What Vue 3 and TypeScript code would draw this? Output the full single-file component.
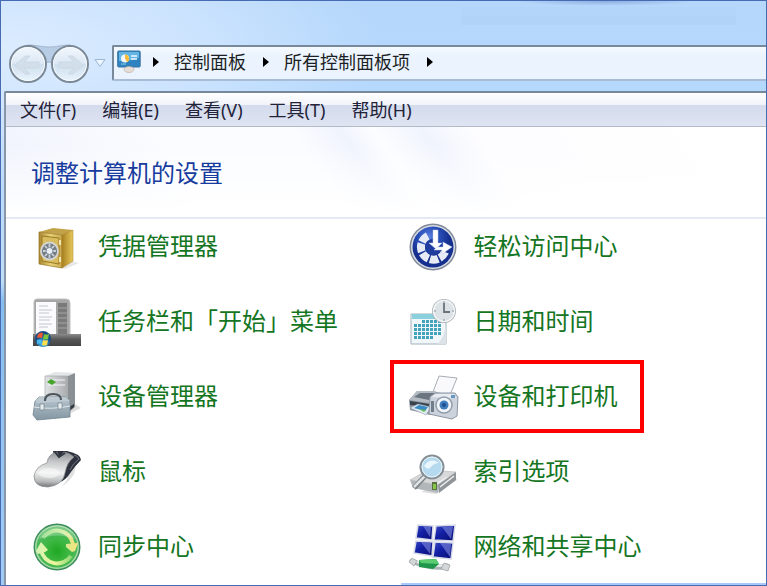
<script setup lang="ts">
interface PanelItem {
  id: string
  label: string
  highlighted?: boolean
}

const crumbs: string[] = ['控制面板', '所有控制面板项']
const menus: string[] = ['文件(F)', '编辑(E)', '查看(V)', '工具(T)', '帮助(H)']
const items: PanelItem[] = [
  { id: 'credentials', label: '凭据管理器' },
  { id: 'access', label: '轻松访问中心' },
  { id: 'taskbar', label: '任务栏和「开始」菜单' },
  { id: 'date', label: '日期和时间' },
  { id: 'devices', label: '设备管理器' },
  { id: 'printers', label: '设备和打印机', highlighted: true },
  { id: 'mouse', label: '鼠标' },
  { id: 'index', label: '索引选项' },
  { id: 'sync', label: '同步中心' },
  { id: 'network', label: '网络和共享中心' },
]

const dateDots: { x: number; y: number }[] = []
for (let row = 0; row < 5; row++) {
  for (let col = 0; col < 7; col++) {
    if ((row === 0 && col < 2) || (row === 4 && col > 4)) continue
    dateDots.push({ x: 5 + col * 4, y: 22 + row * 4 })
  }
}
</script>

<template>
  <div class="window">
    <header class="chrome">
      <div class="history">
        <svg class="history-plate" viewBox="0 0 84 42" aria-hidden="true">
          <defs>
            <linearGradient id="glass" x1="0" y1="0" x2="0" y2="1">
              <stop offset="0" stop-color="#f3f8fd" />
              <stop offset=".48" stop-color="#dce8f4" />
              <stop offset=".52" stop-color="#cfdfee" />
              <stop offset="1" stop-color="#eaf5fe" />
            </linearGradient>
          </defs>
          <path d="M21 2C30 2 34 4 42 4S54 2 63 2a19 19 0 0 1 0 37C54 39 51 19 42 19S30 39 21 39A19 19 0 0 1 21 2Z" fill="#b7cde6" stroke="#a3b7cd" />
          <g fill="url(#glass)" stroke="#7b8997" stroke-width="2">
            <circle cx="21" cy="21" r="18" />
            <circle cx="63" cy="21" r="18" />
          </g>
          <g fill="none" stroke="#f8fcff" stroke-width="1" opacity=".9">
            <circle cx="21" cy="21" r="16.500" />
            <circle cx="63" cy="21" r="16.500" />
          </g>
          <g fill="#d2dfea" stroke="#c8d6e3" stroke-width=".7">
            <path d="m8 22 10-9h5l-6 6h15v6H17l6 6h-5Z" />
            <path d="m76 22-10-9h-5l6 6H52v6h15l-6 6h5Z" />
          </g>
        </svg>
        <button class="round" type="button" aria-label="后退"></button>
        <button class="round" type="button" aria-label="前进"></button>
      </div>
      <button class="recent" type="button" aria-label="最近的页面">
        <svg viewBox="0 0 12 10"><path d="M1 1.500h10L6 8.500Z" fill="#edf6ff" stroke="#9bb5d2" /></svg>
      </button>
      <nav class="address">
        <svg class="panel-icon" viewBox="0 0 24 24" aria-hidden="true">
          <rect x=".7" y="1" width="22.500" height="16" rx="1" fill="#2f82c0" stroke="#3974a1" />
          <path d="M2 2h20v6Q12 12 2 11Z" fill="#63b5e4" />
          <circle cx="8" cy="8.500" r="4" fill="#f2f7fa" />
          <path d="M8 8.500v-4a4 4 0 0 1 2 7.500Z" fill="#f6bc38" />
          <path d="M14 6h6M14 9h6" stroke="#eef8ff" stroke-width="1.500" />
          <path d="M4 14h5" stroke="#8bd0ef" />
          <path d="M9 17h6l1 3H8Z" fill="#c1cbd2" />
          <ellipse cx="12" cy="19.500" rx="5" ry="3" fill="#e6ddd6" stroke="#b5a99d" stroke-width=".6" />
        </svg>
        <template v-for="crumb in crumbs" :key="crumb">
          <svg class="chevron" viewBox="0 0 6 10" aria-hidden="true"><path d="M0 0 6 5 0 10Z" /></svg>
          <a href="#">{{ crumb }}</a>
        </template>
        <svg class="chevron" viewBox="0 0 6 10" aria-hidden="true"><path d="M0 0 6 5 0 10Z" /></svg>
      </nav>
    </header>

    <div class="body">
      <div class="menubar">
        <button v-for="menu in menus" :key="menu" type="button">{{ menu }}</button>
      </div>
      <div class="banner"><h1>调整计算机的设置</h1></div>
      <main class="grid">
        <a v-for="item in items" :key="item.id" href="#" class="item" :class="{ highlighted: item.highlighted }">
          <svg v-if="item.id === 'credentials'" class="icon" viewBox="0 0 48 48" aria-hidden="true">
            <defs>
              <linearGradient id="gold"><stop stop-color="#a9852f" /><stop offset=".5" stop-color="#ead376" /><stop offset="1" stop-color="#c9a94e" /></linearGradient>
              <linearGradient id="goldSide"><stop stop-color="#a8801f" /><stop offset="1" stop-color="#e7c85e" /></linearGradient>
            </defs>
            <path d="M27 45 39 38l7 2-14 6Z" fill="#ddd" opacity=".7" />
            <path d="m6 9 14-4 20 2-10 5Z" fill="#c3a34a" />
            <path d="m6 9 23 3v33L6 41Z" fill="url(#gold)" stroke="#967426" stroke-width=".7" />
            <path d="m29 12 11-5v31l-11 7Z" fill="url(#goldSide)" stroke="#a98324" stroke-width=".5" />
            <path d="m9 13 17 2v26L9 38Z" fill="#d9bc5d" stroke="#9a7826" />
            <path d="M26 17h2v5h-2zM26 34h2v5h-2z" fill="#f2e6b0" />
            <circle cx="16.500" cy="28" r="8.500" fill="#777c80" stroke="#d4d6d6" stroke-width="1.800" />
            <path d="M16.500 21v14M10 28h13M12 23l9 10M21 23l-9 10" stroke="#c8d3dd" stroke-width="1.800" />
            <circle cx="16.500" cy="28" r="3.500" fill="#e8eef2" stroke="#788999" />
          </svg>

          <svg v-else-if="item.id === 'access'" class="icon" viewBox="0 0 48 48" aria-hidden="true">
            <defs>
              <radialGradient id="navy" cx=".4" cy=".25"><stop stop-color="#5c80df" /><stop offset=".5" stop-color="#2a50ba" /><stop offset="1" stop-color="#15308e" /></radialGradient>
            </defs>
            <circle cx="24" cy="24" r="23.500" fill="#818a99" />
            <circle cx="24" cy="24" r="22" fill="#d9dde3" />
            <circle cx="24" cy="24" r="20.500" fill="url(#navy)" />
            <path d="M36 29A12.500 12.500 0 1 1 20 12.500" fill="none" stroke="#e6ebf6" stroke-width="8" stroke-dasharray="8.200 1.600" />
            <circle cx="24" cy="24" r="8" fill="#1f3d9e" />
            <path d="M24 7h5v13h4l-6 6-7-6h4Z" fill="#fff" stroke="#b6c8ea" stroke-width=".5" />
            <path d="M28 24h6v-5l9 5-10 7v-4h-8Z" fill="#fff" stroke="#b6c8ea" stroke-width=".5" />
          </svg>

          <svg v-else-if="item.id === 'taskbar'" class="icon" viewBox="0 0 48 48" aria-hidden="true">
            <defs>
              <linearGradient id="bar" x1="0" y1="0" x2="0" y2="1"><stop stop-color="#8b8b8b" /><stop offset=".45" stop-color="#565656" /><stop offset="1" stop-color="#444" /></linearGradient>
              <radialGradient id="orb" cy=".8"><stop stop-color="#51c9ef" /><stop offset="1" stop-color="#174b85" /></radialGradient>
            </defs>
            <path d="M1 38V4q0-3 3-3h29q4 0 4 4v33Z" fill="#a6a6a6" stroke="#c0c0c0" />
            <path d="M25 5h9v31h-9Z" fill="#7a7a7a" />
            <path d="M25 10h9M25 15h9M25 20h9M25 25h9M25 30h9" stroke="#a5a5a5" />
            <path d="M3 4h20v33H3Z" fill="#fbfbff" />
            <path d="M6 8h9M6 12h13M6 15h10M6 19h13M6 22h11M6 26h13M6 29h9" stroke="#c3c6ce" />
            <path d="M0 36h48v12H0Z" fill="url(#bar)" />
            <circle cx="10" cy="41" r="8" fill="url(#orb)" />
            <path d="m5 36q3-2 5-1l-1 5q-3-1-5 0Z" fill="#ef5934" />
            <path d="m11 36q2 1 5 0l-1 5q-3 1-5 0Z" fill="#7bc63c" />
            <path d="m4 42q3-1 5 0l-1 4q-3-1-4 0Z" fill="#47b8ef" />
            <path d="m10 42q2 1 5 0l-1 5q-3 1-5 0Z" fill="#ffe04c" />
          </svg>

          <svg v-else-if="item.id === 'date'" class="icon" viewBox="0 0 48 48" aria-hidden="true">
            <path d="M2 16h35v30H2Z" fill="#f0f6fa" stroke="#a3b2ba" />
            <path d="M3 16h33v5H3Z" fill="#8bd0dd" />
            <rect v-for="(dot, index) in dateDots" :key="index" :x="dot.x" :y="dot.y" width="3" height="3" fill="#42a3ba" />
            <path d="M37 26v20H28q7-5 9-20" fill="#dce3e8" />
            <circle cx="35" cy="13" r="12" fill="#a7afb5" />
            <circle cx="35" cy="13" r="10.500" fill="#dce2e5" stroke="#f3f5f6" stroke-width="1.500" />
            <path d="M35 5v9h6" fill="none" stroke="#68737a" stroke-width="1.800" />
            <path d="M35 3v2M35 21v2M25 13h2M43 13h2" stroke="#8b969e" />
          </svg>

          <svg v-else-if="item.id === 'devices'" class="icon" viewBox="0 0 48 48" aria-hidden="true">
            <defs>
              <linearGradient id="tower"><stop stop-color="#e0e2e3" /><stop offset="1" stop-color="#a8acae" /></linearGradient>
              <linearGradient id="tool" x1="0" y1="0" x2="0" y2="1"><stop stop-color="#b8c6cf" /><stop offset="1" stop-color="#8396a2" /></linearGradient>
            </defs>
            <path d="m36 41 12-6-6-4Z" fill="#ddd" />
            <path d="m12 3 10-4 20 1-7 3Z" fill="#e3e5e6" />
            <path d="M12 3h23v36H12Z" fill="url(#tower)" stroke="#a8aaab" stroke-width=".7" />
            <path d="M35 3 42 0v34l-7 6Z" fill="#8b9094" />
            <path d="M15 7h17M15 12h17" stroke="#f4f5f5" />
            <path d="m14 9 4-3 5 3-4 3Z" fill="#45a52c" />
            <path d="m36 34 5-3v3l-5 4Z" fill="#343b42" />
            <path d="m2 28 4-4h27l4 4v16L4 47 0 42Z" fill="url(#tool)" stroke="#718491" stroke-width=".8" />
            <path d="m2 28 4-4h27l4 4-32 2Z" fill="#bcc9d0" />
            <path d="M1 34q17 3 36-1" fill="none" stroke="#e0e8eb" />
            <path d="M12 28q0-7 8-7t8 6" fill="none" stroke="#4b545c" stroke-width="2" />
            <path d="M7 31h4v6H7zM25 30h4v6h-4z" fill="#e6edef" stroke="#73818b" stroke-width=".7" />
          </svg>

          <svg v-else-if="item.id === 'printers'" class="icon" viewBox="0 0 48 48" aria-hidden="true">
            <path d="m24 19 6-16 18 2-7 17Z" fill="#f9f9fb" stroke="#a8adb5" />
            <path d="m0 27 8-9h18l4 5v12l-9 7L1 37Z" fill="#8c949d" />
            <path d="m0 27 8-9h18l4 5-10 7Z" fill="#b5bbc2" />
            <path d="m5 24 6-4h15l2 2-8 5Z" fill="#6c7680" />
            <path d="m1 28 19 3v3L1 32Z" fill="#39434d" />
            <path d="m1 35 8-4 13 3-5 8Z" fill="#dfeaf3" stroke="#8e9ba8" stroke-width=".5" />
            <path d="m5 35 5-3 9 2-3 4Z" fill="#3a8bc5" />
            <path d="m10 36 7 1-2 2Z" fill="#68b84d" />
            <path d="m21 24 5-4h20l3 4-1 19-5 3-23-5Z" fill="#cdd3dd" stroke="#8c96a4" />
            <path d="m22 24 5-3h18l2 4Z" fill="#e8ecf1" />
            <path d="M22 28h3v11h-3z" fill="#727d8b" />
            <path d="M42 22h4v3h-4z" fill="#6696c4" />
            <circle cx="35" cy="32" r="8" fill="#f2f5f9" stroke="#929dac" stroke-width="1.500" />
            <circle cx="35" cy="32" r="4.500" fill="#3f7dbd" />
            <circle cx="35" cy="32" r="2" fill="#1e4f92" />
          </svg>

          <svg v-else-if="item.id === 'mouse'" class="icon" viewBox="0 0 48 48" aria-hidden="true">
            <defs>
              <linearGradient id="shell" x1=".55" y1="0" x2=".5" y2="1"><stop stop-color="#8f9295" /><stop offset=".3" stop-color="#c9cbcc" /><stop offset=".6" stop-color="#f0f0f0" /><stop offset=".85" stop-color="#b9bbbc" /><stop offset="1" stop-color="#77797b" /></linearGradient>
            </defs>
            <path d="M14 40q18 2 21-12l8-10-2 8q-7 12-18 14Z" fill="#ccc" opacity=".6" />
            <path d="M20 3h14q14 3 14 9-5 5-10 12-5 8-11 10Z" fill="#2e323e" />
            <path d="M24 4q-9 2-10 11Q3 18 1 28q0 11 14 11 15-2 17-14 2-11 9-16-4-4-10-5l-5 5Z" fill="url(#shell)" stroke="#85888b" stroke-width=".7" />
            <path d="m22 4 4 5 6-4" fill="none" stroke="#31363f" stroke-width="2" />
            <path d="M41 7q4 1 5 4-6 4-9 11" fill="none" stroke="#70757f" />
            <path d="M5 26q3-6 11-6 8 0 11 4-3 7-12 6-6 0-10-4Z" fill="#fff" opacity=".45" />
          </svg>

          <svg v-else-if="item.id === 'index'" class="icon" viewBox="0 0 48 48" aria-hidden="true">
            <path d="m12 44 15 2 21-14-2-3Z" fill="#ddd" />
            <path d="m1 32 18-10 28 2-18 13Z" fill="#d6d8da" stroke="#aaa" stroke-width=".5" />
            <path d="m1 32 28 5v8L4 40Z" fill="#b1b6b9" />
            <path d="m29 37 18-13v8L30 45Z" fill="#8f9498" />
            <path d="m29 35 9-6M31 39l14-11" stroke="#efefef" stroke-width="1.500" />
            <path d="M23 34h5v8h-5z" fill="#5b7040" />
            <path d="M24 36h3v5h-3z" fill="#86c94a" />
            <path d="M16 28 5 40" stroke="#7c8287" stroke-width="5" />
            <path d="M16 28 5 39" stroke="#dfe2e4" stroke-width="2.500" />
            <circle cx="23" cy="19" r="11.500" fill="#b5d9ef" stroke="#858e94" stroke-width="2" />
            <circle cx="23" cy="19" r="10" fill="none" stroke="#edf5f9" />
            <path d="M15 18q6-9 15-3-5 0-8 4t-7-1Z" fill="#f2faff" opacity=".85" />
          </svg>

          <svg v-else-if="item.id === 'sync'" class="icon" viewBox="0 0 48 48" aria-hidden="true">
            <defs>
              <radialGradient id="emerald" cy=".6"><stop stop-color="#1fa822" /><stop offset=".6" stop-color="#3fb845" /><stop offset="1" stop-color="#4cb75d" /></radialGradient>
              <linearGradient id="arrowRight" gradientUnits="userSpaceOnUse" x1="7" y1="0" x2="46" y2="0"><stop stop-color="#7fd47a" /><stop offset=".6" stop-color="#cdec94" /><stop offset="1" stop-color="#ffe07a" /></linearGradient>
              <linearGradient id="arrowLeft" gradientUnits="userSpaceOnUse" x1="3" y1="0" x2="41" y2="0"><stop stop-color="#d5f3b6" /><stop offset=".5" stop-color="#ecf49a" /><stop offset="1" stop-color="#7fd370" /></linearGradient>
            </defs>
            <circle cx="24" cy="24" r="23.500" fill="#3d8c5c" />
            <circle cx="24" cy="24" r="22" fill="#a5dca6" />
            <circle cx="24" cy="24" r="20.500" fill="url(#emerald)" />
            <path d="M10 15A16.500 16.500 0 0 1 40 21" fill="none" stroke="url(#arrowRight)" stroke-width="4" />
            <path d="m33 21 12-1-3 8-3 1-6-5Z" fill="url(#arrowRight)" />
            <path d="M38 33A16.500 16.500 0 0 1 8 27" fill="none" stroke="url(#arrowLeft)" stroke-width="4" />
            <path d="m3 28 5-9 7 8-3 2-7 2Z" fill="url(#arrowLeft)" />
            <path d="M6 16Q11 3 24 3t18 13Q25 9 6 16Z" fill="#fff" opacity=".25" />
          </svg>

          <svg v-else class="icon" viewBox="0 0 48 48" aria-hidden="true">
            <defs>
              <linearGradient id="screen" x1="0" y1="0" x2="1" y2="1"><stop stop-color="#3c4dc8" /><stop offset=".4" stop-color="#1421a6" /><stop offset="1" stop-color="#070c72" /></linearGradient>
            </defs>
            <g fill="url(#screen)" stroke="#d6d9e7" stroke-width="1.500">
              <path d="m9 2 15 1-1 14-16-2Z" />
              <path d="m27 3 19-1-2 16-19-1Z" />
              <path d="m7 18 17 1-1 14-18-3Z" />
              <path d="m26 19 18 1-2 16-18-2Z" />
            </g>
            <path d="m14 3 8 1-1 10ZM33 4l11-1-2 13ZM12 19l10 1-1 11ZM31 20l11 1-1 13Z" fill="#8c98e6" opacity=".55" />
            <path d="M3 38q20 9 35 5" fill="none" stroke="#acb3b5" stroke-width="5" stroke-linecap="round" />
            <path d="M3 37q20 8 35 5" fill="none" stroke="#eef1ef" stroke-width="2" />
            <path d="m10 37 17-1 3 5-6 5-14-2Z" fill="#20964b" />
            <path d="m10 37 17-1 3 5-18-1Z" fill="#5bcc71" />
            <path d="m3 35-3 4 5 4 3-5ZM35 40l-3 6 7 2 2-6Z" fill="#d3d7d7" stroke="#8b9294" stroke-width=".6" />
          </svg>
          <span>{{ item.label }}</span>
        </a>
      </main>
      <div class="bottom-edge"></div>
    </div>
  </div>
</template>

<style>
body {
  margin: 0;
}
</style>

<style scoped>
.window {
  box-sizing: border-box;
  min-height: 100vh;
  display: flex;
  flex-direction: column;
  border: 1px solid #466bb3;
  padding-left: 3px;
  background:
    radial-gradient(ellipse 90px 5px at 79% 0, #8eabe0 0, transparent 100%),
    linear-gradient(#b3d5f9, #b2d3f8) 94% 6px / 36% 18px no-repeat,
    radial-gradient(ellipse 380px 140px at 0 50px, #dcecff 0%, #cde4fe 50%, transparent 100%),
    linear-gradient(180deg, #b5d7fb 0, #b5d8fd 90px, #c0ddf8 280px, #86bdf0 300px, #a1cbf5 100%);
  font-family: "Noto Sans", "Noto Sans CJK SC", sans-serif;
}
button {
  padding: 0;
  border: 0;
  background: none;
  font: inherit;
  color: inherit;
}
a {
  color: inherit;
  text-decoration: none;
}
.chrome {
  display: flex;
  align-items: center;
  padding: 44px 0 10px 3px;
}
.history {
  position: relative;
  display: flex;
  width: 84px;
  height: 36px;
}
.history-plate {
  position: absolute;
  inset: -2px 0 auto;
  width: 84px;
  height: 42px;
}
.round {
  position: relative;
  flex: 1;
  border-radius: 50%;
}
.recent {
  width: 12px;
  height: 10px;
  margin: 0 6px 0 3px;
}
.recent svg {
  display: block;
}
.address {
  box-sizing: border-box;
  flex: 1;
  display: flex;
  align-items: center;
  height: 36px;
  padding: 0 0 2px 3px;
  border: 2px solid #78899b;
  border-right: 0;
  border-bottom-color: #a8bdd5;
  border-radius: 2px 0 0 2px;
  background: linear-gradient(#f5faff, #eaf3fe 30%, #eaf3fe);
  font-size: 18px;
  line-height: 24px;
  color: #1c1f24;
}
.panel-icon {
  width: 24px;
  height: 24px;
}
.chevron {
  width: 6px;
  height: 10px;
  margin: 0 15px 0 17px;
}
.panel-icon + .chevron {
  margin-left: 12px;
}
.body {
  flex: 1;
  display: flex;
  flex-direction: column;
  border-top: 2px solid #77889b;
  border-left: 2px solid #8796a8;
  border-radius: 2px 0 0;
  background: #fff;
}
.menubar {
  display: flex;
  gap: 26px;
  padding: 4px 14px 3px;
  border-bottom: 1px solid #b5bac9;
  background: linear-gradient(#fff 0, #f1f3fa 35%, #d4dbec 38%, #dfe4f3 100%);
  font-size: 18px;
  line-height: 26px;
  color: #222238;
}
.banner {
  padding: 29px 25px 27px;
  border-bottom: 2px solid #e3eaf3;
  background:
    linear-gradient(180deg, transparent 20%, #fff 95%),
    linear-gradient(55deg, #eef2fc 0, #fbfcff 26%, #fbfcff 42%, #f0f4fd 48%, #fcfdff 52%, #f0f4fd 58%, #fdfdff 64%, #fff 100%);
}
h1 {
  margin: 0;
  font-size: 24px;
  font-weight: 400;
  line-height: 34px;
  color: #173c9e;
}
.grid {
  flex: 1;
  display: grid;
  grid-template-columns: 1fr 1fr;
  align-content: start;
  gap: 27px 18px;
  padding: 4px 0 12px 27px;
}
.item {
  position: relative;
  display: flex;
  align-items: center;
  justify-self: start;
  gap: 17px;
  height: 48px;
  font-size: 24px;
  line-height: 36px;
  white-space: nowrap;
  color: #147522;
}
.item span {
  padding-bottom: 2px;
}
.icon {
  width: 48px;
  height: 48px;
  overflow: visible;
}
.highlighted::after {
  content: "";
  position: absolute;
  inset: -13px -26px -12px -19px;
  border: 4px solid #fe0000;
}
.bottom-edge {
  align-self: flex-end;
  width: 48%;
  height: 2px;
  background: #a9c9fa;
}
</style>
